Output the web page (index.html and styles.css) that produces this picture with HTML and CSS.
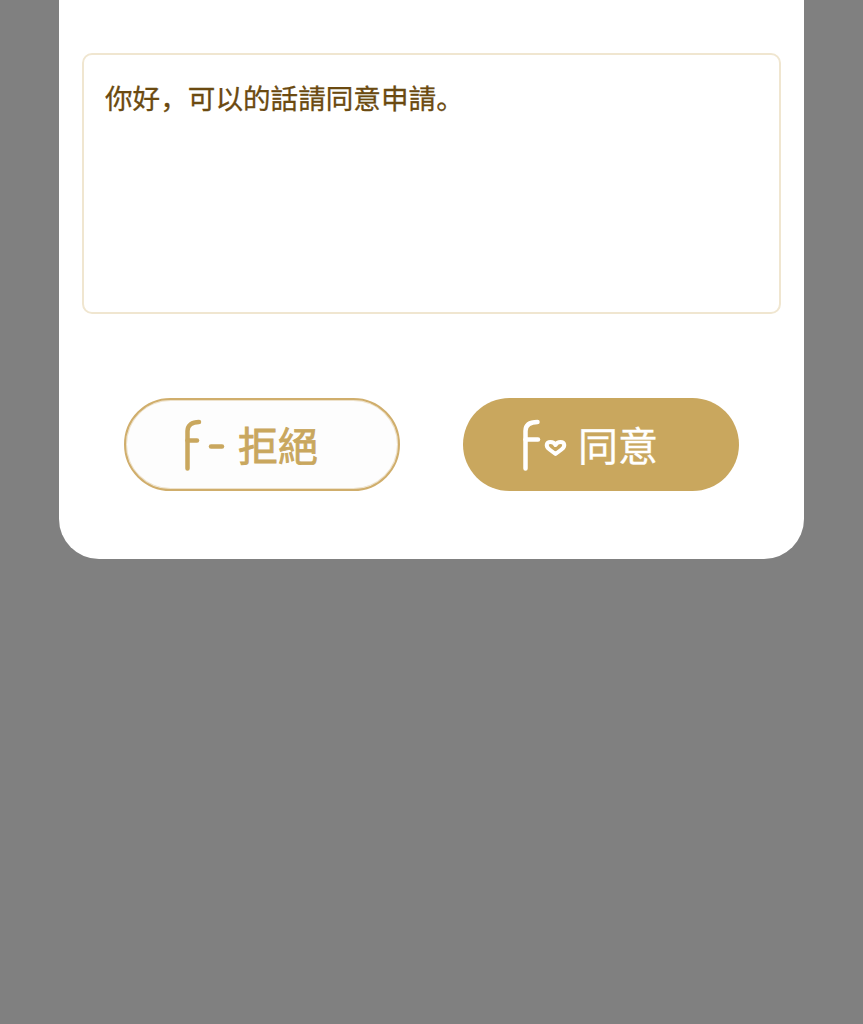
FILE: index.html
```html
<!DOCTYPE html>
<html>
<head>
<meta charset="utf-8">
<title>申請</title>
<link rel="stylesheet" href="styles.css">
</head>
<body>
<div class="card">
    <div class="message">你好，可以的話請同意申請。</div>
    <div class="actions">
        <div class="btn btn-reject">
            <svg class="btn-icon" width="46" height="56" viewBox="0 0 46 56">
                <path d="M3.500 51.500 V14 C3.500 8 8 5 15 5" />
                <path d="M3.500 23.500 H13" />
                <path d="M27 29.500 H38" />
            </svg>
            <span>拒絕</span>
        </div>
        <div class="btn btn-agree">
            <svg class="btn-icon" width="46" height="56" viewBox="0 0 46 56">
                <path d="M3.500 51.500 V14 C3.500 8 8 5 15.500 5" />
                <path d="M3.500 22.500 H16" />
                <path class="heart" d="M33.500 37 L27.500 32.500 C23 29 24.500 25 28.500 25 Q32 25 33.500 28 Q35 25 38.500 25 C42.500 25 44 29 39.500 32.500 Z" />
            </svg>
            <span>同意</span>
        </div>
    </div>
</div>
</body>
</html>
```

FILE: styles.css
```css
* {
    box-sizing: border-box;
}
html, body {
    height: 100%;
}
body {
    margin: 0;
    background-color: #808080;
    font-family: "Noto Sans CJK SC", "Noto Sans", sans-serif;
    overflow: hidden;
}
.card {
    width: 745px;
    height: 559px;
    margin-left: 59px;
    padding: 53px 23px 0;
    background-color: #fff;
    border-radius: 0 0 40px 40px;
}
.message {
    height: 261px;
    padding: 23px 21px;
    border: 2px solid #f0e6d0;
    border-radius: 10px;
    color: #6b4a10;
    font-size: 27.6px;
    line-height: 38px;
    -webkit-text-stroke: 0.3px #6b4a10;
}
.actions {
    display: flex;
    justify-content: center;
    gap: 63px;
    margin-top: 84px;
}
.btn {
    display: flex;
    align-items: center;
    width: 276px;
    height: 93px;
    border-radius: 47px;
    font-size: 40px;
    line-height: 1;
}
.btn span {
    padding-bottom: 2px;
}
.btn-icon {
    flex: none;
    fill: none;
    stroke-width: 4.5;
    stroke-linecap: round;
    stroke-linejoin: round;
}
.btn-icon .heart {
    stroke-width: 4;
}
.btn-reject {
    padding-left: 58px;
    background-color: #fdfdfd;
    border: 2px solid #d0ae6c;
    box-shadow: inset 0 0 0 1px rgba(208, 174, 108, 0.35);
    color: #c9a75e;
    -webkit-text-stroke: 0.9px #c9a75e;
}
.btn-reject .btn-icon {
    stroke: #c9a75e;
}
.btn-reject span {
    margin-left: 8px;
}
.btn-agree {
    padding-left: 59px;
    background-color: #c9a75e;
    color: #fff;
    -webkit-text-stroke: 0.3px #fff;
}
.btn-agree .btn-icon {
    stroke: #fff;
}
.btn-agree span {
    margin-left: 10px;
}
```
